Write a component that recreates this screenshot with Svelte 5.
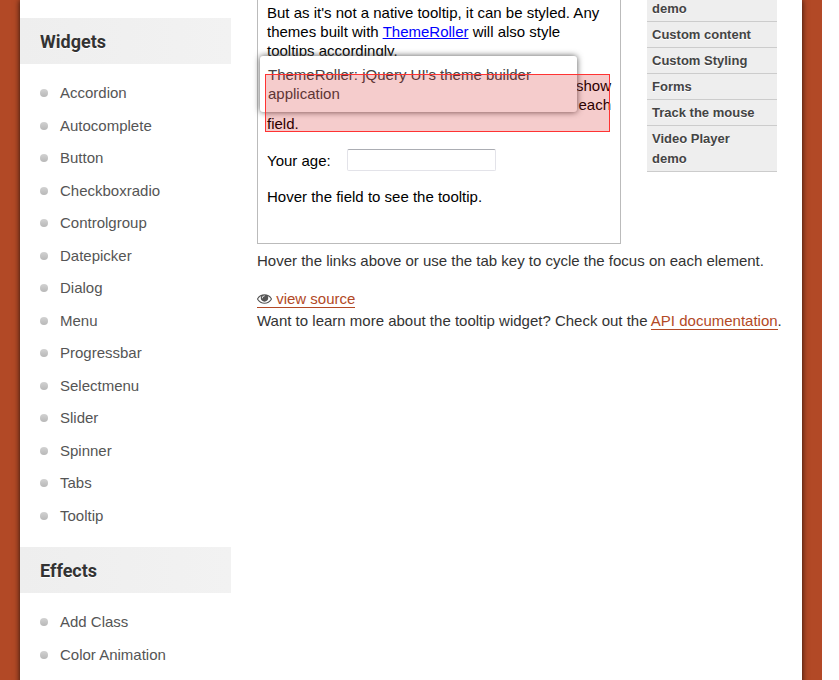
<script>
  const sections = [
    {
      title: 'Widgets',
      items: [
        'Accordion', 'Autocomplete', 'Button', 'Checkboxradio', 'Controlgroup',
        'Datepicker', 'Dialog', 'Menu', 'Progressbar', 'Selectmenu', 'Slider',
        'Spinner', 'Tabs', 'Tooltip'
      ]
    },
    { title: 'Effects', items: ['Add Class', 'Color Animation'] }
  ];
  const examples = ['demo', 'Custom content', 'Custom Styling', 'Forms', 'Track the mouse', 'Video Player demo'];
  let age = $state('');
</script>

<div class="backdrop">
  <div class="page">
    <aside class="sidebar">
      {#each sections as section}
        <h3>{section.title}</h3>
        <ul>
          {#each section.items as item}
            <li><a href="#top">{item}</a></li>
          {/each}
        </ul>
      {/each}
    </aside>

    <main>
      <div class="top-row">
        <section class="demo">
          <p>
            But as it's not a native tooltip, it can be styled. Any<br />
            themes built with <a href="#themeroller">ThemeRoller</a> will also style<br />
            tooltips accordingly.
          </p>
          <p class="flush">
            Tooltips are also useful for form elements, to show<br />
            some additional information in the context of each
            <span>field.</span>
          </p>
          <div class="field">
            <label for="age">Your age:</label>
            <input id="age" type="text" bind:value={age} />
          </div>
          <p>Hover the field to see the tooltip.</p>
          <div class="tooltip" role="tooltip">ThemeRoller: jQuery UI's theme builder application</div>
          <div class="highlight"></div>
        </section>

        <nav class="examples">
          <ul>
            {#each examples as example}
              <li><a href="#example">{example}</a></li>
            {/each}
          </ul>
        </nav>
      </div>

      <p class="note">Hover the links above or use the tab key to cycle the focus on each element.</p>
      <div class="source">
        <a href="#source">
          <svg width="15" height="12" viewBox="0 256 1792 1408" aria-hidden="true">
            <path
              fill="#555"
              d="M1664 960q-152-236-381-353 61 104 61 225 0 185-131.500 316.500t-316.500 131.500-316.500-131.500-131.500-316.500q0-121 61-225-229 117-381 353 133 205 333.500 326.500t434.500 121.500 434.500-121.500 333.500-326.500zm-720-384q0-20-14-34t-34-14q-125 0-214.500 89.500t-89.500 214.500q0 20 14 34t34 14 34-14 14-34q0-86 61-147t147-61q20 0 34-14t14-34zm848 384q0 34-20 69-140 230-376.500 368.500t-499.500 138.500-499.500-139-376.500-368q-20-35-20-69t20-69q140-229 376.500-368t499.500-139 499.500 139 376.500 368q20 35 20 69z"
            />
          </svg>
          view source</a>
      </div>
      <div class="more">
        Want to learn more about the tooltip widget? Check out the <a href="#api">API documentation</a>.
      </div>
    </main>
  </div>
</div>

<style>
  :global(body) {
    background: #fff;
  }
  .backdrop {
    margin-right: 17px;
    padding: 0 20px;
    background: #b24926;
    font: 15px/22px "Liberation Sans", Arial, sans-serif;
    color: #333;
    overflow: hidden;
  }
  .page {
    display: flex;
    align-items: flex-start;
    min-height: 100vh;
    background: #fff;
    box-shadow: 0 0 6px rgba(0, 0, 0, 0.8);
  }
  ul {
    list-style: none;
    margin: 0;
    padding: 0;
  }
  p {
    margin: 0;
  }

  .sidebar {
    flex: 0 0 211px;
    padding-top: 18px;
  }
  .sidebar h3 {
    margin: 0;
    padding: 13px 20px 11px;
    background: linear-gradient(to right, #eee, #f2f2f2);
    font: bold 18px/22px Roboto, sans-serif;
    text-shadow: 0 1px 0 #fff;
  }
  .sidebar ul {
    padding: 18px 20px 10px;
  }
  .sidebar li {
    display: flex;
    align-items: center;
    gap: 12px;
    margin-bottom: 10px;
    line-height: 1.5;
  }
  .sidebar li::before {
    content: "";
    width: 8px;
    height: 8px;
    border-radius: 50%;
    background: linear-gradient(#d2d2d2, #b8b8b8);
  }
  .sidebar a {
    color: #555;
    text-decoration: none;
  }

  main {
    flex: 1;
    min-width: 0;
    padding: 0 25px 0 26px;
  }
  .top-row {
    display: flex;
    align-items: flex-start;
    gap: 26px;
  }
  .demo {
    position: relative;
    box-sizing: border-box;
    flex: 1;
    min-width: 0;
    padding: 3px 9px 37px;
    border: 1px solid #bbb;
    border-top: 0;
    line-height: 19px;
    color: #000;
  }
  .demo p + p {
    margin-top: 16px;
  }
  .demo p a {
    color: #00f;
  }
  .flush {
    text-align: right;
  }
  .flush span {
    display: block;
    text-align: left;
  }
  .field {
    display: flex;
    align-items: center;
    gap: 16px;
    margin: 16px 0;
  }
  .field input {
    box-sizing: border-box;
    width: 149px;
    height: 22px;
    padding: 1px 3px;
    border: 1px solid #e3e3e9;
    border-top-color: #abadb3;
    border-radius: 2px;
    background: #fff;
  }
  .tooltip {
    position: absolute;
    top: 56px;
    left: 2px;
    box-sizing: border-box;
    width: 317px;
    padding: 9px 32px 9px 8px;
    border-radius: 3px;
    background: #fff;
    box-shadow: 0 0 6px #555;
    color: #444;
  }
  .highlight {
    position: absolute;
    top: 74px;
    left: 7px;
    right: 10px;
    box-sizing: border-box;
    height: 58px;
    border: 1px solid #f33;
    background: rgba(204, 0, 0, 0.2);
    background-clip: padding-box;
  }

  .examples {
    flex: 0 0 130px;
    font-size: 13px;
    font-weight: bold;
    line-height: 20px;
  }
  .examples li {
    padding: 3px 15px 2px 5px;
    border-bottom: 1px solid #ccc;
    background: #eee;
  }
  .examples li:first-child {
    padding: 0 5px 4px;
    line-height: 17px;
  }
  .examples a {
    color: #444;
    text-decoration: none;
    text-shadow: 0 1px 0 #fff;
  }

  .note {
    margin: 6px 0 16px;
  }
  .more {
    white-space: nowrap;
  }
  .source a,
  .more a {
    color: #b24926;
    text-decoration: none;
    border-bottom: 1px solid #b24926;
  }
  .source svg {
    vertical-align: -1px;
  }
</style>
